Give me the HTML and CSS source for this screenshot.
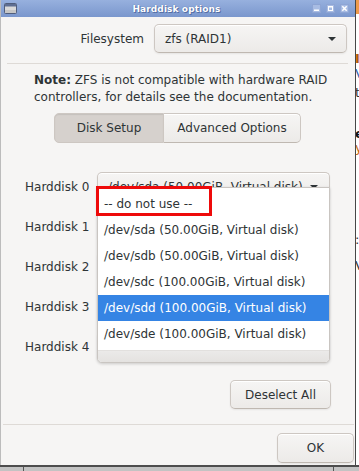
FILE: index.html
```html
<!DOCTYPE html>
<html>
<head>
<meta charset="utf-8">
<title>Harddisk options</title>
<link rel="stylesheet" href="styles.css">
</head>
<body>
<div class="screen">
  <div class="top">
    <div class="window">
      <div class="titlebar">
        <div class="tb-left">
          <svg class="wicon" width="13" height="11" viewBox="0 0 13 11">
            <rect x="0.5" y="0.5" width="12" height="10" rx="1" fill="#d9d9d9" stroke="#4f5d7c"/>
            <rect x="1" y="1" width="11" height="2.5" fill="#5e6e92"/>
            <rect x="1" y="7" width="11" height="3" fill="#c6c6c6"/>
          </svg>
        </div>
        <div class="title">Harddisk options</div>
        <div class="tb-right">
          <span class="wbtn"><svg width="9" height="9" viewBox="0 0 9 9"><rect x="0.5" y="0.5" width="8" height="8" fill="#a8bce3" stroke="#8ea5d4"/><rect x="2" y="5.5" width="5" height="1.5" fill="#fff"/></svg></span>
          <span class="wbtn"><svg width="9" height="9" viewBox="0 0 9 9"><rect x="0.5" y="0.5" width="8" height="8" fill="#a8bce3" stroke="#8ea5d4"/><rect x="2.5" y="2.5" width="4" height="4" fill="none" stroke="#fff"/><rect x="2" y="2" width="5" height="1.5" fill="#fff"/></svg></span>
          <span class="wbtn"><svg width="9" height="9" viewBox="0 0 9 9"><rect x="0.5" y="0.5" width="8" height="8" fill="#a8bce3" stroke="#8ea5d4"/><path d="M2.3 2.3 L6.7 6.7 M6.7 2.3 L2.3 6.7" stroke="#fff" stroke-width="1.5"/></svg></span>
        </div>
      </div>

      <div class="content">
        <div class="fs-row">
          <span class="fs-label">Filesystem</span>
          <div class="combo fs-combo"><span class="ctext">zfs (RAID1)</span><span class="arrow"></span></div>
        </div>

        <div class="sep sep-top"></div>

        <p class="note"><b>Note:</b> ZFS is not compatible with hardware RAID<br>controllers, for details see the documentation.</p>

        <div class="tabs">
          <div class="tab tab-disk active">Disk Setup</div>
          <div class="tab tab-adv">Advanced Options</div>
        </div>

        <div class="disks">
          <div class="disk-row">
            <span class="disk-label">Harddisk 0</span>
            <div class="combo-wrap">
              <div class="combo disk-combo"><span class="ctext">/dev/sda (50.00GiB, Virtual disk)</span><span class="arrow"></span></div>
              <div class="popup">
                <div class="item">-- do not use --</div>
                <div class="item">/dev/sda (50.00GiB, Virtual disk)</div>
                <div class="item">/dev/sdb (50.00GiB, Virtual disk)</div>
                <div class="item">/dev/sdc (100.00GiB, Virtual disk)</div>
                <div class="item selected">/dev/sdd (100.00GiB, Virtual disk)</div>
                <div class="item">/dev/sde (100.00GiB, Virtual disk)</div>
                <div class="popup-foot"></div>
              </div>
              <div class="mark"></div>
            </div>
          </div>
          <div class="disk-row">
            <span class="disk-label">Harddisk 1</span>
            <div class="combo-wrap"><div class="combo disk-combo"><span class="ctext"></span><span class="arrow"></span></div></div>
          </div>
          <div class="disk-row">
            <span class="disk-label">Harddisk 2</span>
            <div class="combo-wrap"><div class="combo disk-combo"><span class="ctext"></span><span class="arrow"></span></div></div>
          </div>
          <div class="disk-row">
            <span class="disk-label">Harddisk 3</span>
            <div class="combo-wrap"><div class="combo disk-combo"><span class="ctext"></span><span class="arrow"></span></div></div>
          </div>
          <div class="disk-row">
            <span class="disk-label">Harddisk 4</span>
            <div class="combo-wrap"><div class="combo disk-combo"><span class="ctext"></span><span class="arrow"></span></div></div>
          </div>
        </div>

        <div class="deselect-row"><button class="btn deselect">Deselect All</button></div>

        <div class="sep sep-bottom"></div>

        <div class="ok-row"><button class="btn ok">OK</button></div>
      </div>
    </div>

    <div class="bgstrip">
      <div class="bg-orange"></div>
      <div class="g g1">I</div>
      <div class="g g2">V</div>
      <div class="g g3">t</div>
      <div class="g g4">e</div>
      <div class="g g5">y</div>
      <div class="g g6">:</div>
      <div class="g g7">V</div>
    </div>
  </div>
  <div class="ground"><span class="tick t1"></span><span class="tick t2"></span></div>
</div>
</body>
</html>
```

FILE: styles.css
```css
* { box-sizing: border-box; }
html, body { margin: 0; padding: 0; }
body {
  width: 359px;
  height: 471px;
  overflow: hidden;
  background: #ffffff;
  font-family: "DejaVu Sans", "Liberation Sans", sans-serif;
  font-size: 12px;
  color: #2e3436;
}
.screen { display: flex; flex-direction: column; width: 359px; height: 471px; }
.top { display: flex; height: 465px; flex: none; }

.window {
  width: 356px;
  height: 465px;
  flex: none;
  background: #f6f5f4;
  border-left: 1px solid #bcbcbc;
  border-right: 1px solid #474747;
  display: flex;
  flex-direction: column;
}

/* title bar */
.titlebar {
  height: 17px;
  flex: none;
  display: grid;
  grid-template-columns: 1fr auto 1fr;
  align-items: center;
  background: linear-gradient(#97b0de, #7a97cd);
  padding: 0 6px 0 3px;
}
.tb-left { display: flex; align-items: center; }
.wicon { display: block; }
.title {
  color: #ffffff;
  font-weight: bold;
  font-size: 9px;
  letter-spacing: 0.1px;
  text-shadow: 0 0 1px #46609a, 1px 1px 0 rgba(50, 75, 130, 0.55);
}
.tb-right { display: flex; justify-content: flex-end; gap: 5px; }
.wbtn { display: block; width: 9px; height: 9px; }
.wbtn svg { display: block; }

/* content */
.content { display: flex; flex-direction: column; flex: 1; }

.fs-row { display: flex; align-items: center; margin-top: 7px; height: 29px; }
.fs-label { width: 143px; text-align: right; margin-right: 10px; }

.combo {
  height: 29px;
  border: 1px solid #cdc7c2;
  border-bottom-color: #bfb8b1;
  border-radius: 5px;
  background: linear-gradient(to top, #edebe9 2px, #f6f5f4);
  box-shadow: inset 0 1px #ffffff, 0 1px 2px rgba(0, 0, 0, 0.07);
  display: flex;
  align-items: center;
  justify-content: space-between;
  white-space: nowrap;
}
.fs-combo { width: 193px; padding: 0 10px 0 10px; }
.arrow {
  width: 0; height: 0;
  border-left: 4px solid transparent;
  border-right: 4px solid transparent;
  border-top: 4px solid #2e3436;
  margin-top: 1px;
}

.sep { height: 1px; background: #dedad6; flex: none; }
.sep-top { margin: 10px 7px 0 6px; }

.note { margin: 8px 0 0 0; padding-left: 33px; line-height: 17px; }
.note b { font-weight: bold; }

.tabs { display: flex; margin-top: 7px; padding-left: 53px; }
.tab {
  height: 30px;
  line-height: 28px;
  text-align: center;
  border: 1px solid #cdc7c2;
  border-bottom-color: #bfb8b1;
  background: linear-gradient(to top, #edebe9 2px, #f6f5f4);
  box-shadow: inset 0 1px #ffffff;
}
.tab-disk { width: 110px; border-radius: 5px 0 0 5px; }
.tab-adv { width: 137px; border-left: none; border-radius: 0 5px 5px 0; }
.tab.active {
  background: #d6d1cd;
  box-shadow: inset 0 1px 1px rgba(0, 0, 0, 0.08);
  border-color: #cdc7c2;
}

.disks { display: flex; flex-direction: column; gap: 11px; margin-top: 29px; }
.disk-row { display: flex; align-items: center; height: 29px; padding-left: 24px; }
.disk-label { width: 72px; flex: none; }
.combo-wrap { position: relative; width: 233px; }
.disk-combo { width: 233px; padding: 0 11px 0 10px; }
.disk-combo .ctext { overflow: hidden; }

.popup {
  position: absolute;
  z-index: 10;
  left: 0;
  top: 15px;
  width: 233px;
  background: #ffffff;
  border: 1px solid #c9c5c1;
  border-radius: 0 0 5px 5px;
  box-shadow: 0 1px 3px rgba(0, 0, 0, 0.18);
  padding-top: 3px;
  overflow: hidden;
}
.item {
  height: 26px;
  line-height: 26px;
  padding-left: 6px;
  white-space: nowrap;
}
.item.selected { background: #3584e4; color: #ffffff; }
.popup-foot {
  height: 12px;
  margin-top: 3px;
  background: linear-gradient(#ebeae9, #e4e2e0);
  border-top: 1px solid #e2e0de;
}
.mark {
  position: absolute;
  z-index: 11;
  left: -1px;
  top: 14px;
  width: 116px;
  height: 30px;
  border: 3px solid #ee0a0a;
}

.btn {
  font: inherit;
  color: #2e3436;
  border: 1px solid #cdc7c2;
  border-bottom-color: #bfb8b1;
  border-radius: 5px;
  background: linear-gradient(to top, #edebe9 2px, #f6f5f4);
  box-shadow: inset 0 1px #ffffff, 0 1px 2px rgba(0, 0, 0, 0.07);
  padding: 0;
}
.deselect-row { display: flex; justify-content: flex-end; margin-top: 19px; padding-right: 24px; }
.deselect { width: 101px; height: 29px; }
.sep-bottom { margin: 15px 1px 0 2px; }
.ok-row { display: flex; justify-content: flex-end; margin-top: 8px; padding-right: 1px; }
.ok { width: 77px; height: 30px; }

/* background to the right of the window */
.bgstrip {
  width: 3px;
  flex: none;
  overflow: hidden;
  background: #ffffff;
  display: flex;
  flex-direction: column;
}
.bg-orange { height: 14px; background: #ee9a4a; flex: none; }
.g { flex: none; font-size: 13px; line-height: 14px; height: 14px; margin-left: -1px; }
.g1 { margin-top: 38px; color: #b25b0c; font-weight: bold; }
.g2 { margin-top: 1px; color: #2f5fb0; }
.g3 { margin-top: 5px; color: #333; }
.g4 { margin-top: 27px; color: #111; font-weight: bold; }
.g5 { margin-top: 0; color: #c2650f; }
.g6 { margin-top: 78px; color: #333; }
.g7 { margin-top: 12px; color: #333; }

.ground {
  height: 6px;
  flex: none;
  border-top: 2px solid #4d4d4d;
  background: #c3c3c3;
  display: flex;
}
.tick { display: block; width: 1px; height: 4px; background: #555; }
.t1 { margin-left: 23px; }
.t2 { margin-left: 309px; }
```
